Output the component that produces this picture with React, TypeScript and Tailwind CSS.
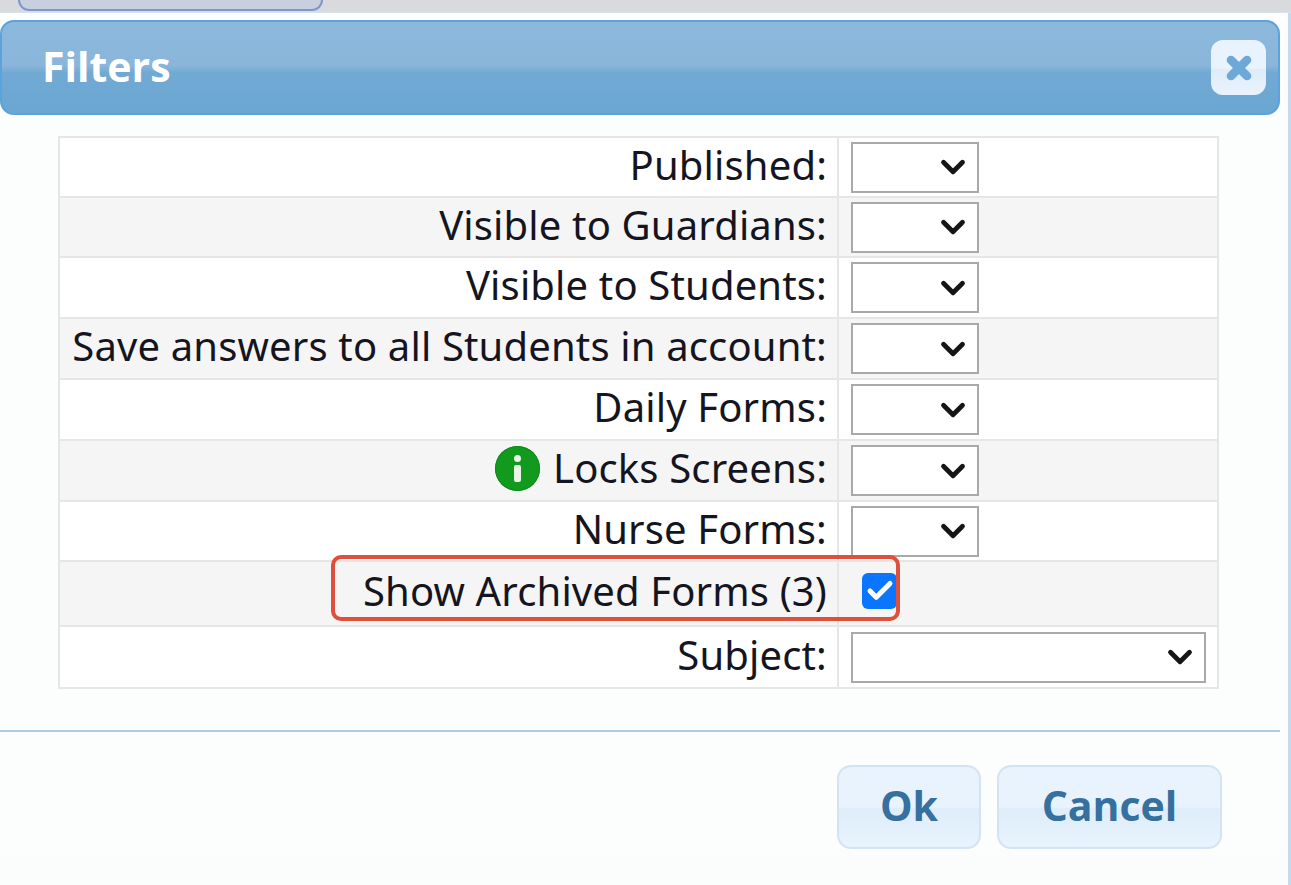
import React from 'react';
import { ChevronDown, Check, X } from 'lucide-react';

interface FilterRow {
  label: string;
  height: string;
  info?: boolean;
}

const rows: FilterRow[] = [
  { label: 'Published:', height: 'h-[60px]' },
  { label: 'Visible to Guardians:', height: 'h-[60px]' },
  { label: 'Visible to Students:', height: 'h-[61px]' },
  { label: 'Save answers to all Students in account:', height: 'h-[61px]' },
  { label: 'Daily Forms:', height: 'h-[61px]' },
  { label: 'Locks Screens:', height: 'h-[61px]', info: true },
  { label: 'Nurse Forms:', height: 'h-[60px]' },
];

const FakeSelect: React.FC<{ wide?: boolean }> = ({ wide }) => (
  <div
    className={`${wide ? 'w-[355px]' : 'w-[128px]'} h-[51px] bg-white border-2 border-[#a9a9a9] flex items-center justify-end pr-[5px]`}
  >
    <ChevronDown size={38} strokeWidth={3} className="text-[#151515]" />
  </div>
);

const InfoIcon = () => (
  <span className="w-[45px] h-[45px] rounded-full bg-[#129a1e] flex flex-col items-center justify-center gap-[3px] mr-[13px] shadow-[inset_0_0_0_1px_#0e8a18]">
    <span className="w-[7px] h-[7px] rounded-full bg-[#e6f5e6]" />
    <span className="w-[7px] h-[17px] rounded-[2px] bg-[#e6f5e6]" />
  </span>
);

const App: React.FC = () => {
  return (
    <div className="relative w-[1291px] h-[885px] overflow-hidden bg-[#fbfdfd] font-['Noto_Sans','Open_Sans',sans-serif] text-[#15151f]">
      <div className="h-[13px] bg-[#d9dade] pl-[18px] border-b border-[#d3e3f3]">
        <div className="w-[305px] h-[11px] bg-[#c8d0e0] border-x-2 border-b-2 border-[#7f97c6] rounded-b-[14px]" />
      </div>

      <div className="w-[1284px] bg-[#fcfdfd] rounded-tr-[12px]">
        <div className="h-[7px] bg-white rounded-tr-[12px]" />
        <div className="w-[1280px] h-[95px] rounded-[14px] border-2 border-[#5aa3dc] bg-[linear-gradient(180deg,#8cb8db_0%,#89b6da_48%,#70a9d4_56%,#6ba7d3_100%)] flex items-center justify-between pl-[40px] pr-[12px]">
          <h1 className="text-[41px] font-bold text-white leading-none font-['Open_Sans',sans-serif] pb-[2px]">Filters</h1>
          <button className="w-[55px] h-[55px] rounded-[12px] bg-[linear-gradient(180deg,#e9f3fd_0%,#e9f3fd_50%,#deecf9_55%,#e9f3fd_100%)] flex items-center justify-center">
            <X size={32} strokeWidth={6.5} className="text-[#6ea8d6]" />
          </button>
        </div>

        <div className="pt-[21px] pl-[58px]">
          <table className="w-[1161px] border-collapse border-2 border-[#e6e6e6] text-[40px] leading-none tracking-[0.15px]">
            <tbody>
              {rows.map((row, i) => (
                <tr key={row.label} className={`${row.height} ${i % 2 === 0 ? 'bg-white' : 'bg-[#f5f5f5]'} border-b-2 border-[#e6e6e6]`}>
                  <td className="w-[779px] p-0 pr-[10px] pb-[5px] border-r-2 border-[#e6e6e6]">
                    <div className="flex items-center justify-end whitespace-nowrap">
                      {row.info && <InfoIcon />}
                      {row.label}
                    </div>
                  </td>
                  <td className="p-0 pl-[12px]">
                    <FakeSelect />
                  </td>
                </tr>
              ))}
              <tr className="h-[65px] bg-[#f5f5f5] border-b-2 border-[#e6e6e6]">
                <td className="p-0 pr-[10px] pb-[5px] border-r-2 border-[#e6e6e6] text-right whitespace-nowrap">Show Archived Forms (3)</td>
                <td className="p-0 pl-[23px] pb-[6px]">
                  <div className="w-[35px] h-[36px] rounded-[6px] bg-[#0a75ff] flex items-center justify-center">
                    <Check size={30} strokeWidth={4} className="text-white" />
                  </div>
                </td>
              </tr>
              <tr className="h-[62px] bg-white">
                <td className="p-0 pr-[10px] pb-[5px] border-r-2 border-[#e6e6e6] text-right whitespace-nowrap">Subject:</td>
                <td className="p-0 pl-[12px]">
                  <FakeSelect wide />
                </td>
              </tr>
            </tbody>
          </table>
        </div>

        <div className="mt-[41px] w-[1280px] border-t-2 border-[#a9cde8] pt-[33px] pl-[837px] flex gap-[16px]">
          <button className="w-[144px] h-[84px] rounded-[14px] border-2 border-[#d2e4f3] bg-[linear-gradient(180deg,#e8f3fd_0%,#e8f3fd_50%,#deedf9_52%,#e8f3fd_100%)] text-[41px] font-bold text-[#35709f] font-['Open_Sans',sans-serif] pb-[2px]">Ok</button>
          <button className="w-[225px] h-[84px] rounded-[14px] border-2 border-[#d2e4f3] bg-[linear-gradient(180deg,#e8f3fd_0%,#e8f3fd_50%,#deedf9_52%,#e8f3fd_100%)] text-[41px] font-bold text-[#35709f] font-['Open_Sans',sans-serif] pb-[2px]">Cancel</button>
        </div>
      </div>

      <div className="absolute right-0 top-[13px] bottom-0 w-[3px] bg-[#c5d9ef]" />
      <div className="absolute left-[331px] top-[555px] w-[569px] h-[66px] rounded-[10px] border-[4px] border-[#e04f3c]" />
    </div>
  );
};

export default App;
